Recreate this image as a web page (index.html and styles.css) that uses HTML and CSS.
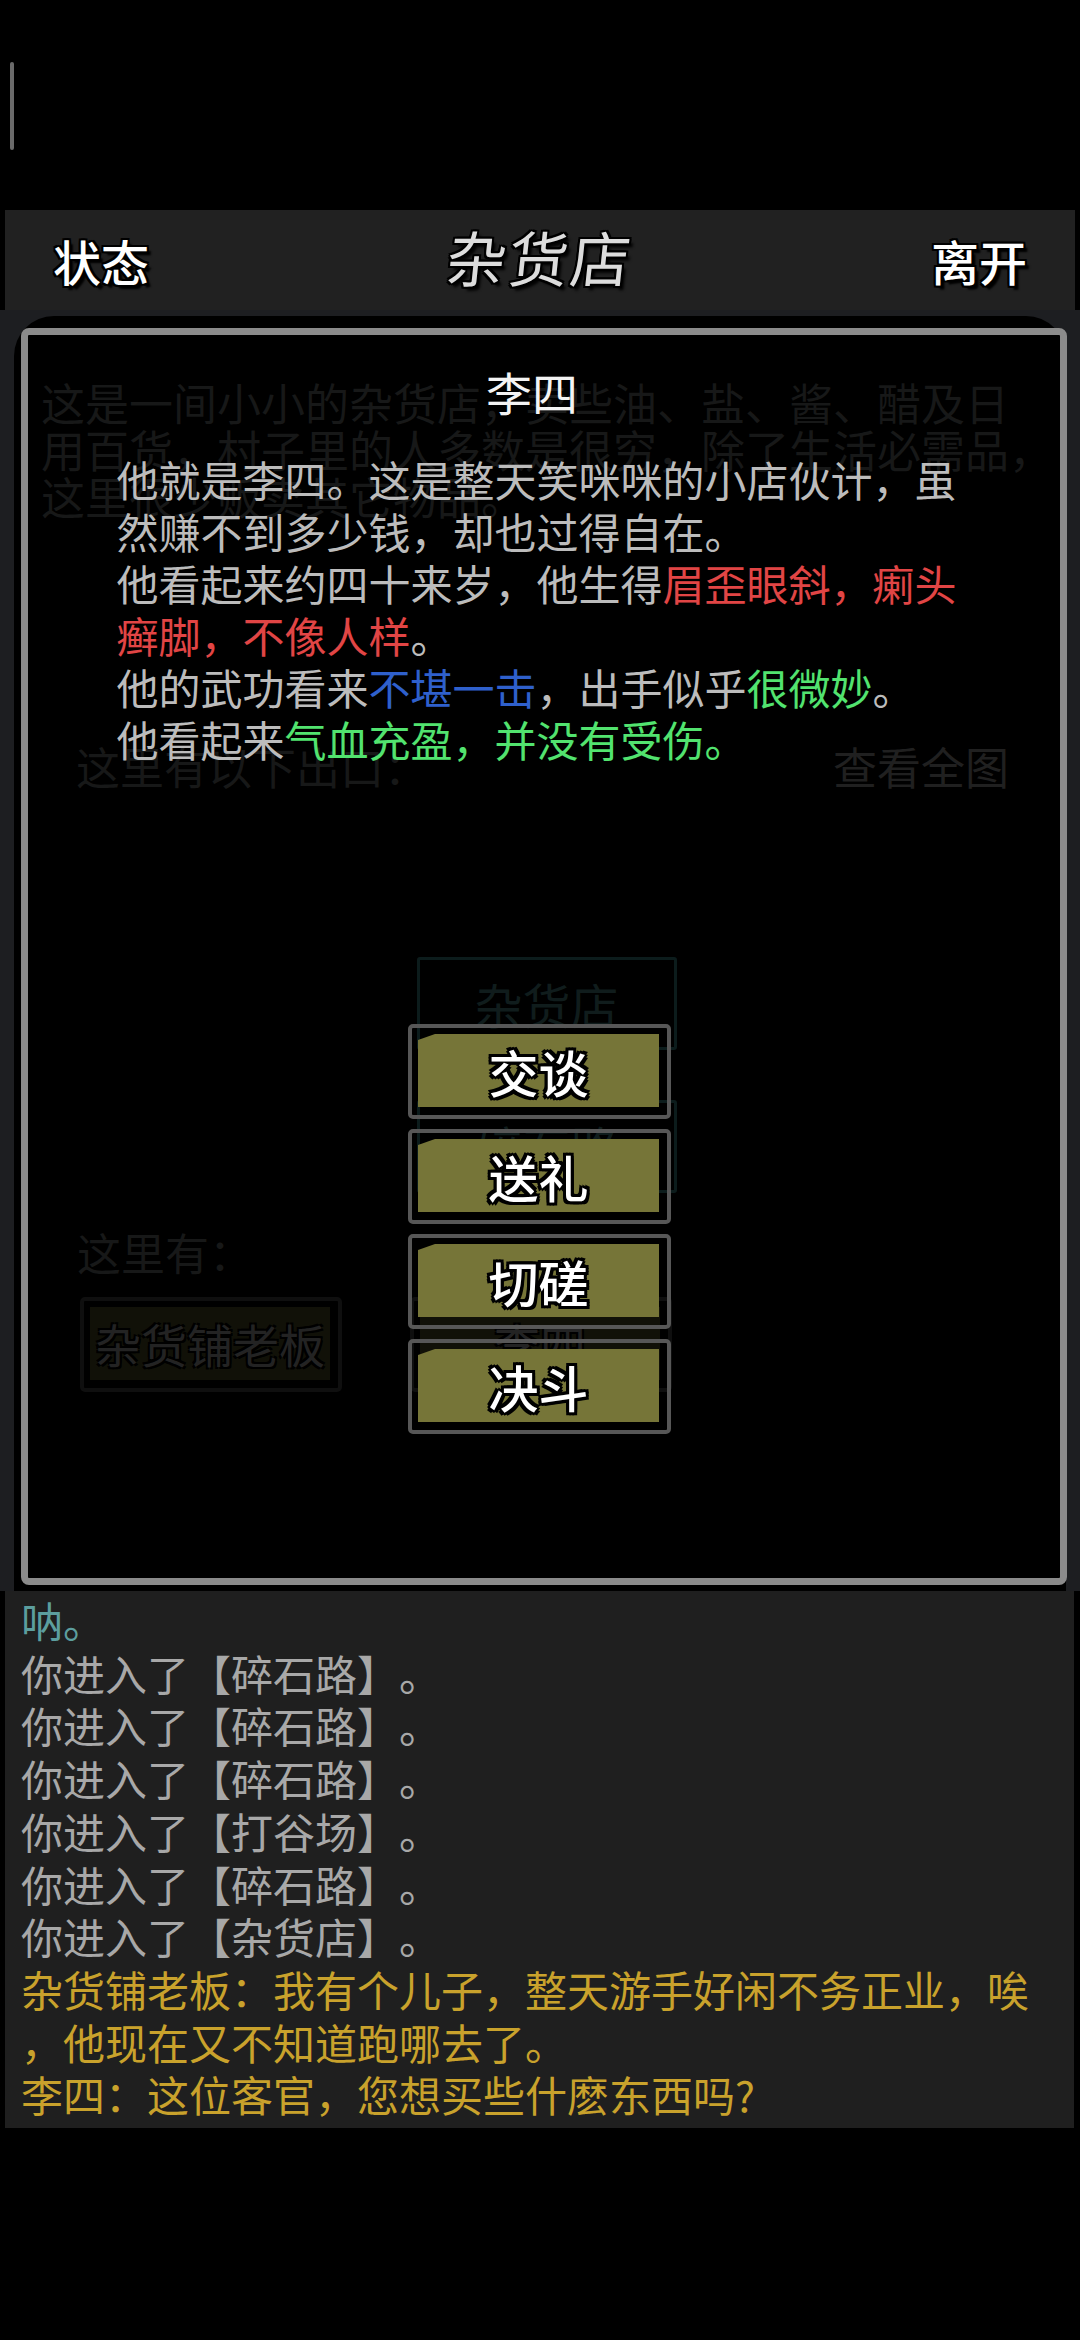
FILE: index.html
```html
<!DOCTYPE html>
<html lang="zh-CN">
<head>
<meta charset="utf-8">
<title>杂货店</title>
<link rel="stylesheet" href="styles.css">
</head>
<body>
<div class="phone">
  <div class="status"><span class="indicator"></span></div>
  <header class="topbar">
    <span class="nav">状态</span>
    <span class="nav-title">杂货店</span>
    <span class="nav">离开</span>
  </header>
  <main class="main">
    <div class="scene">
      <p class="scene-desc">这是一间小小的杂货店，卖些油、盐、酱、醋及日<br>用百货，村子里的人多数是很穷，除了生活必需品，<br>这里很少贩卖其它物品。</p>
      <div class="exits-row"><span>这里有以下出口：</span><span class="map-link">查看全图</span></div>
      <div class="exit-map">
        <div class="exit-box">杂货店</div>
        <div class="exit-box">碎石路</div>
      </div>
      <p class="here">这里有：</p>
      <div class="npcs">
        <div class="npc-btn"><span class="npc-face">杂货铺老板</span></div>
        <div class="npc-btn"><span class="npc-face">李四</span></div>
      </div>
    </div>
    <section class="modal">
      <h2 class="modal-title">李四</h2>
      <div class="modal-text">
        <p>他就是李四。这是整天笑咪咪的小店伙计，虽然赚不到多少钱，却也过得自在。</p>
        <p>他看起来约四十来岁，他生得<span class="red">眉歪眼斜，瘌头癣脚，不像人样</span>。</p>
        <p>他的武功看来<span class="blue">不堪一击</span>，出手似乎<span class="green">很微妙</span>。</p>
        <p>他看起来<span class="green">气血充盈，并没有受伤。</span></p>
      </div>
      <div class="actions">
        <div class="act"><span class="act-face">交谈</span></div>
        <div class="act"><span class="act-face">送礼</span></div>
        <div class="act"><span class="act-face">切磋</span></div>
        <div class="act"><span class="act-face">决斗</span></div>
      </div>
    </section>
  </main>
  <section class="log">
    <p class="teal">呐。</p>
    <p>你进入了【碎石路】。</p>
    <p>你进入了【碎石路】。</p>
    <p>你进入了【碎石路】。</p>
    <p>你进入了【打谷场】。</p>
    <p>你进入了【碎石路】。</p>
    <p>你进入了【杂货店】。</p>
    <p class="yellow">杂货铺老板：我有个儿子，整天游手好闲不务正业，唉，他现在又不知道跑哪去了。</p>
    <p class="yellow">李四：这位客官，您想买些什麽东西吗?</p>
  </section>
</div>
</body>
</html>
```

FILE: styles.css
```css
* { box-sizing: border-box; }

html, body {
  margin: 0;
  padding: 0;
  background: #000;
}

body {
  font-family: "Noto Sans CJK SC", "Noto Sans", sans-serif;
  color: #bbb;
  text-spacing-trim: space-all;
  font-feature-settings: "chws" 0, "halt" 0;
}

p { margin: 0; }

.phone {
  width: 1080px;
  height: 2340px;
  background: #000;
  display: flex;
  flex-direction: column;
}

/* status area with the small indicator */
.status {
  height: 210px;
  padding: 62px 0 0 10px;
}
.indicator {
  display: block;
  width: 4px;
  height: 88px;
  border-radius: 2px;
  background: #6a6a6a;
}

/* top bar */
.topbar {
  height: 100px;
  margin: 0 5px;
  background: #212121;
  display: flex;
  align-items: center;
  justify-content: space-between;
  padding: 0 48px 0 48px;
}
.nav {
  font-size: 48px;
  line-height: 1;
  font-weight: 500;
  color: #fff;
  text-shadow:
    -2px -2px 0 #000, 2px -2px 0 #000, -2px 2px 0 #000, 2px 2px 0 #000,
    0 -2px 0 #000, 0 2px 0 #000, -2px 0 0 #000, 2px 0 0 #000,
    4px 4px 2px #000;
}
.nav-title {
  font-size: 60px;
  line-height: 1;
  font-weight: 400;
  color: #dcdcdc;
  transform: skewX(-6deg);
  letter-spacing: 2px;
  margin-top: -8px;
  text-shadow:
    -2px -2px 0 #000, 2px -2px 0 #000, -2px 2px 0 #000, 2px 2px 0 #000,
    0 -2px 0 #000, 0 2px 0 #000, -2px 0 0 #000, 2px 0 0 #000,
    4px 4px 3px #000;
}

/* main area with dimmed scene */
.main {
  position: relative;
  height: 1281px;
  background: #1d1e21;
  padding: 6px 14px 0 14px;
}
.scene {
  height: 100%;
  background: #000;
  border-radius: 40px 40px 0 0;
  padding: 63px 0 0 27px;
  color: #1a1b1b;
  font-size: 44px;
  line-height: 47px;
}
.scene-desc {
  white-space: nowrap;
}
.exits-row {
  margin-top: 223px;
  padding: 0 57px 0 35px;
  display: flex;
  justify-content: space-between;
}
.map-link { color: #242424; }
.exit-map {
  margin-top: 167px;
  display: flex;
  flex-direction: column;
  align-items: center;
  gap: 50px;
  padding-right: 14px;
}
.exit-box {
  width: 260px;
  height: 93px;
  border: 3px solid #0e2020;
  border-radius: 3px;
  display: flex;
  align-items: center;
  justify-content: center;
  color: #122020;
  font-size: 48px;
}
.here {
  margin-top: 36px;
  padding-left: 36px;
}
.npcs {
  margin-top: 21px;
  padding-left: 39px;
  display: flex;
  gap: 68px;
}
.npc-btn {
  width: 262px;
  height: 95px;
  border: 4px solid #111;
  border-radius: 5px;
  padding: 6px 8px 8px 6px;
}
.npc-face {
  display: flex;
  height: 100%;
  align-items: center;
  justify-content: center;
  background: #14140a;
  color: #282828;
  font-size: 46px;
  text-shadow: -2px -2px 0 #000, 2px -2px 0 #000, -2px 2px 0 #000, 2px 2px 0 #000;
}

/* modal (translucent, scene shows through) */
.modal {
  position: absolute;
  top: 18px;
  left: 21px;
  width: 1046px;
  height: 1257px;
  background: rgba(0, 0, 0, 0.1);
  border: 7px solid #8b8b8b;
  border-radius: 8px;
  padding-top: 26px;
  display: flex;
  flex-direction: column;
  align-items: center;
}
.modal-title {
  margin: 0;
  font-size: 46px;
  line-height: 60px;
  font-weight: 400;
  color: #f4f4f4;
  padding-right: 24px;
}
.modal-text {
  margin-top: 32px;
  width: 860px;
  margin-left: 5px;
  font-size: 42px;
  line-height: 52px;
  color: #bcbcbc;
  line-break: anywhere;
}
.red { color: #e14545; }
.blue { color: #2f60cc; }
.green { color: #52e36f; }

.actions {
  margin-top: 259px;
  margin-right: 9px;
  display: flex;
  flex-direction: column;
  gap: 10px;
}
.act {
  width: 263px;
  height: 95px;
  border: 4px solid #575757;
  border-radius: 5px;
  background: transparent;
  padding: 6px 8px 8px 6px;
}
.act-face {
  display: flex;
  height: 100%;
  align-items: center;
  justify-content: center;
  background: #767538;
  clip-path: polygon(17px 0, 100% 0, 100% 100%, 0 100%, 0 6px);
  color: #fff;
  font-size: 50px;
  line-height: 1;
  font-weight: 500;
  text-shadow:
    -3px -3px 0 #000, 3px -3px 0 #000, -3px 3px 0 #000, 3px 3px 0 #000,
    0 -3px 0 #000, 0 3px 0 #000, -3px 0 0 #000, 3px 0 0 #000;
}

/* message log */
.log {
  height: 537px;
  margin: 0 6px 0 5px;
  background: #1f1f1f;
  padding: 3px 16px 6px 16px;
  font-size: 42px;
  line-height: 52.7px;
  color: #a8a8a8;
  line-break: anywhere;
}
.log .teal { color: #5c9e9e; }
.log .yellow { color: #c9a22c; }
```
